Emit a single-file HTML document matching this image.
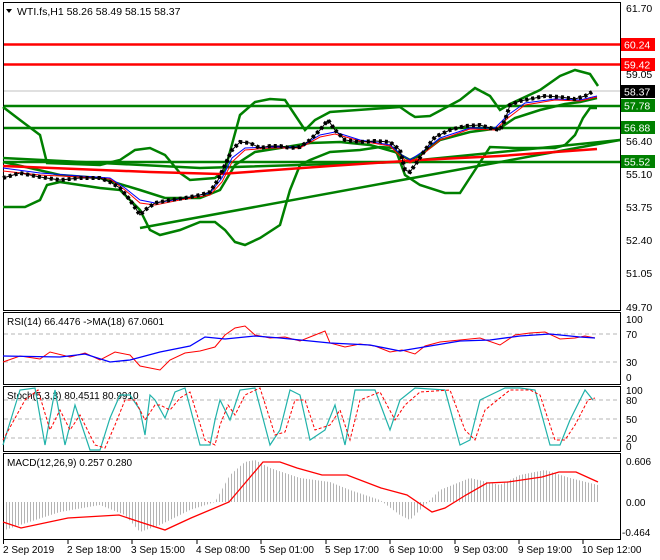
<!DOCTYPE html>
<html><head><meta charset="utf-8"><style>
html,body{margin:0;padding:0;background:#fff;}
svg{display:block;font-family:"Liberation Sans",sans-serif;}
</style></head><body>
<svg width="660" height="560" viewBox="0 0 660 560" xmlns="http://www.w3.org/2000/svg">
<defs>
<pattern id="hs" width="3" height="600" patternUnits="userSpaceOnUse"><rect x="0" y="0" width="1" height="600" fill="#b4b4b4"/></pattern>
</defs>
<rect width="660" height="560" fill="#fff"/>
<g fill="none" stroke="#000" stroke-width="1">
<rect x="3.5" y="2.5" width="617" height="308"/>
<rect x="3.5" y="312.5" width="617" height="72"/>
<rect x="3.5" y="386.5" width="617" height="65"/>
<rect x="3.5" y="453.5" width="617" height="86"/>
</g>
<line x1="4" y1="91" x2="620" y2="91" stroke="#c0c0c0"/>
<g stroke="#f00" stroke-width="2.5"><line x1="4" y1="44.5" x2="620" y2="44.5"/><line x1="4" y1="64.5" x2="620" y2="64.5"/></g>
<g stroke="#008000" stroke-width="2.5"><line x1="4" y1="106" x2="620" y2="106"/><line x1="4" y1="128" x2="620" y2="128"/><line x1="4" y1="162" x2="620" y2="162"/></g>
<g fill="none" stroke="#008000" stroke-width="2.5">
<polyline points="140,228 620,140"/>
<polyline points="3,158 200,168 400,162 620,140"/>
<polyline points="3,107 20,120 40,135 47,163 100,165 120,160 135,150 150,148 165,155 180,173 190,180 215,178 225,170 240,115 255,102 270,99 285,100 295,115 305,130 315,120 330,112 400,107 410,114 415,117 430,116 460,100 475,88 490,96 500,110 510,104 540,90 560,76 575,70 590,74 598,86"/>
<polyline points="3,207 25,207 40,200 47,185 60,182 80,185 100,188 120,190 140,210 150,230 160,235 180,230 200,222 215,222 225,230 235,242 245,245 260,238 280,225 290,190 300,165 310,160 330,152 360,150 380,147 395,148 405,175 420,185 445,193 460,193 475,170 490,147 515,148 540,148 555,148 565,145 575,135 583,118 590,108 597,108"/>
<polyline points="3,162 30,168 60,175 100,178 140,190 165,198 200,198 220,190 235,165 255,152 280,148 310,143 340,142 370,145 395,152 410,160 420,155 440,140 470,132 500,128 515,118 540,110 565,104 580,102 597,98"/>
</g>
<polyline fill="none" stroke="#f00" stroke-width="2.5" points="3,166 150,172 220,174 330,166 420,160 500,156 597,149"/>
<polyline fill="none" stroke="#00f" stroke-width="1" points="3,168 40,173 80,176 110,178 125,188 140,200 155,203 180,199 210,193 222,178 232,158 245,148 270,147 300,147 320,135 335,132 360,140 390,145 402,155 410,160 422,152 440,138 470,128 495,128 508,115 525,103 555,99 580,100 597,96"/>
<polyline fill="none" stroke="#f00" stroke-width="1" points="3,171 40,175 80,177 110,179 125,190 140,203 155,205 180,200 210,195 222,182 232,162 245,150 270,148 300,148 320,137 335,134 360,141 390,146 402,158 410,163 422,155 440,140 470,129 495,130 508,118 525,105 555,100 580,101 597,97"/>
<polyline fill="none" stroke="#000" stroke-width="1" points="3,178 20,173 40,177 60,180 80,178 100,178 110,182 120,188 130,200 140,215 145,210 155,203 170,200 185,198 200,195 210,192 218,180 225,165 232,150 240,142 250,143 260,148 270,146 280,146 290,148 300,147 310,140 320,130 328,120 335,130 345,140 360,142 375,141 390,142 400,150 405,170 410,172 415,165 425,150 435,137 450,130 465,126 480,125 490,128 500,130 505,120 510,105 520,101 530,99 545,96 560,97 575,99 585,96 592,92"/>
<polyline fill="none" stroke="#000" stroke-width="4" stroke-dasharray="3 3" points="3,178 20,173 40,177 60,180 80,178 100,178 110,182 120,188 130,200 140,215 145,210 155,203 170,200 185,198 200,195 210,192 218,180 225,165 232,150 240,142 250,143 260,148 270,146 280,146 290,148 300,147 310,140 320,130 328,120 335,130 345,140 360,142 375,141 390,142 400,150 405,170 410,172 415,165 425,150 435,137 450,130 465,126 480,125 490,128 500,130 505,120 510,105 520,101 530,99 545,96 560,97 575,99 585,96 592,92"/>
<path d="M6,9 L12,9 L9,13 Z" fill="#000"/>
<text x="17" y="15" font-size="10.5" fill="#000">WTI.fs,H1  58.26 58.49 58.15 58.37</text>
<g font-size="10.5" fill="#000">
<text x="626" y="12">61.70</text><text x="626" y="78">59.05</text><text x="626" y="145">56.40</text><text x="626" y="178">55.10</text><text x="626" y="211">53.75</text><text x="626" y="244">52.40</text><text x="626" y="277">51.05</text><text x="626" y="311">49.70</text>
</g>
<rect x="621" y="38" width="34" height="13" fill="#f00"/><text x="624" y="48.5" font-size="10.5" fill="#fff">60.24</text>
<rect x="621" y="58" width="34" height="13" fill="#f00"/><text x="624" y="68.5" font-size="10.5" fill="#fff">59.42</text>
<rect x="621" y="85" width="34" height="13" fill="#000"/><text x="624" y="95.5" font-size="10.5" fill="#fff">58.37</text>
<rect x="621" y="99" width="34" height="13" fill="#008000"/><text x="624" y="109.5" font-size="10.5" fill="#fff">57.78</text>
<rect x="621" y="121" width="34" height="13" fill="#008000"/><text x="624" y="131.5" font-size="10.5" fill="#fff">56.88</text>
<rect x="621" y="155" width="34" height="13" fill="#008000"/><text x="624" y="165.5" font-size="10.5" fill="#fff">55.52</text>
<!-- RSI -->
<g stroke="#b4b4b4" stroke-dasharray="4 3"><line x1="4" y1="334" x2="620" y2="334"/><line x1="4" y1="362" x2="620" y2="362"/></g>
<text x="7" y="325" font-size="10" fill="#000">RSI(14) 66.4476  -&gt;MA(18) 67.0601</text>
<g font-size="10" fill="#000"><text x="626" y="323">100</text><text x="626" y="338">70</text><text x="626" y="366">30</text><text x="626" y="381">0</text></g>
<polyline fill="none" stroke="#f00" stroke-width="1" points="3,362 20,356 40,359 50,352 70,357 85,353 100,360 115,352 130,355 140,366 160,370 170,360 185,353 200,351 215,347 225,335 235,328 245,326 255,335 270,338 285,337 300,341 315,335 325,331 330,343 345,347 360,344 375,346 390,352 402,350 415,354 425,346 440,342 460,340 480,338 500,345 515,335 530,333 545,332 560,339 575,338 585,336 595,338"/>
<polyline fill="none" stroke="#00f" stroke-width="1.3" points="3,356 60,357 85,354 110,362 130,360 160,352 190,346 205,337 225,339 255,336 280,338 300,340 330,343 370,345 400,351 430,346 460,341 490,340 520,336 550,334 580,337 595,338"/>
<!-- Stoch -->
<g stroke="#b4b4b4" stroke-dasharray="4 3"><line x1="4" y1="400" x2="620" y2="400"/><line x1="4" y1="419" x2="620" y2="419"/><line x1="4" y1="438" x2="620" y2="438"/></g>
<text x="7" y="399" font-size="10" fill="#000">Stoch(5,3,3) 80.4511 80.9910</text>
<g font-size="10" fill="#000"><text x="626" y="394">100</text><text x="626" y="404">80</text><text x="626" y="423">50</text><text x="626" y="442">20</text><text x="626" y="450">0</text></g>
<polyline fill="none" stroke="#20b2aa" stroke-width="1.2" points="3,445 20,390 35,388 45,445 55,390 65,445 75,405 90,450 100,450 110,418 120,395 130,395 140,410 145,435 150,395 155,400 165,418 175,392 185,388 200,445 210,445 215,420 220,400 230,420 240,390 255,388 270,445 280,430 290,390 300,395 310,440 325,430 335,405 345,445 355,390 375,390 390,430 400,400 415,388 445,390 460,445 470,440 480,400 505,388 520,388 535,390 550,445 560,445 570,420 585,390 593,400"/>
<polyline fill="none" stroke="#f00" stroke-width="1" stroke-dasharray="3 2" points="3,440 25,400 38,390 50,430 60,410 70,430 80,415 95,445 105,448 115,425 125,400 135,400 145,420 155,405 160,405 170,410 180,398 190,392 205,440 215,445 220,425 228,405 235,415 245,395 260,388 275,435 285,432 295,400 305,400 315,430 330,425 340,410 350,440 360,400 380,392 395,420 405,405 420,392 450,390 465,430 475,440 485,410 510,390 530,390 540,395 555,440 565,440 575,425 588,400 595,398"/>
<!-- MACD -->
<polygon fill="url(#hs)" points="5,502 5,530 20,525 60,512 100,505 125,515 140,532 160,525 190,510 215,502 230,475 245,462 255,460 270,468 300,478 330,482 350,490 380,500 400,515 410,520 420,510 440,490 470,478 500,485 520,475 545,470 570,478 598,485 598,502"/>
<polyline fill="none" stroke="#f00" stroke-width="1.3" points="3,522 21,528 68,518 119,515 140,522 165,530 191,518 229,502 263,462 280,462 297,468 322,475 347,475 381,488 407,495 432,512 445,508 466,495 487,483 508,482 542,477 559,472 576,472 598,482"/>
<text x="7" y="466" font-size="10" fill="#000">MACD(12,26,9) 0.257 0.280</text>
<g font-size="10" fill="#000"><text x="626" y="465">0.606</text><text x="626" y="506">0.00</text><text x="622" y="536">-0.464</text></g>
<g stroke="#000"><line x1="3.5" y1="540" x2="3.5" y2="544"/><line x1="68" y1="540" x2="68" y2="544"/><line x1="132" y1="540" x2="132" y2="544"/><line x1="197" y1="540" x2="197" y2="544"/><line x1="261" y1="540" x2="261" y2="544"/><line x1="326" y1="540" x2="326" y2="544"/><line x1="390" y1="540" x2="390" y2="544"/><line x1="455" y1="540" x2="455" y2="544"/><line x1="519" y1="540" x2="519" y2="544"/><line x1="583" y1="540" x2="583" y2="544"/></g>
<g font-size="10" fill="#000">
<text x="3" y="553">2 Sep 2019</text><text x="67" y="553">2 Sep 18:00</text><text x="131" y="553">3 Sep 15:00</text><text x="196" y="553">4 Sep 08:00</text><text x="260" y="553">5 Sep 01:00</text><text x="325" y="553">5 Sep 17:00</text><text x="389" y="553">6 Sep 10:00</text><text x="454" y="553">9 Sep 03:00</text><text x="518" y="553">9 Sep 19:00</text><text x="582" y="553">10 Sep 12:00</text>
</g>
</svg>
</body></html>
